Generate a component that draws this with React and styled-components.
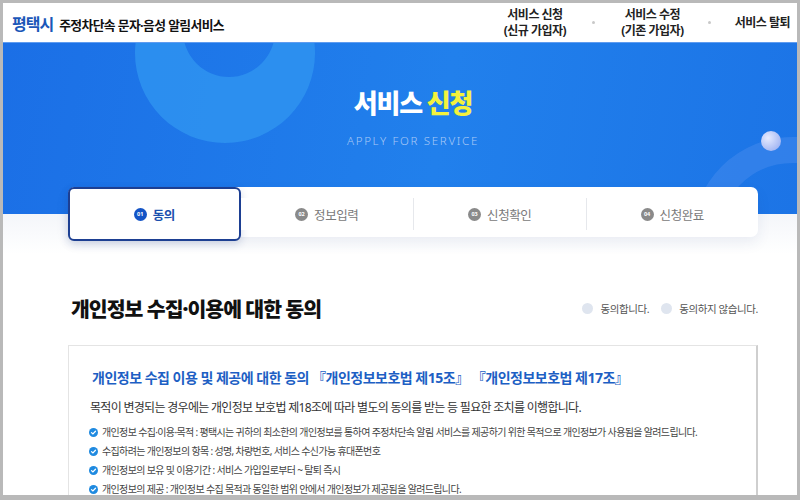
import styled, { createGlobalStyle } from "styled-components";

const GlobalStyle = createGlobalStyle`
  html, body {
    margin: 0;
    padding: 0;
    background: #ffffff;
  }
  body {
    font-family: "Noto Sans", "Noto Sans CJK KR", sans-serif;
    color: #222;
  }
  * { box-sizing: border-box; }
`;

const Frame = styled.div`
  width: 800px;
  height: 500px;
  overflow: hidden;
  border: 3px solid #b9b9b9;
  border-bottom-width: 5px;
  background: #fff;
  display: flex;
  flex-direction: column;
`;

const Header = styled.header`
  height: 40px;
  flex-shrink: 0;
  display: flex;
  align-items: center;
  justify-content: space-between;
  padding: 0 7px 0 9px;
  background: #fff;
  border-bottom: 1px solid #5f9cf0;
`;

const Brand = styled.div`
  display: flex;
  align-items: baseline;
  gap: 6px;
`;

const City = styled.span`
  font-size: 16px;
  font-weight: 700;
  color: #1b57b8;
  letter-spacing: -1px;
`;

const ServiceName = styled.span`
  font-size: 12.8px;
  font-weight: 700;
  color: #111;
  letter-spacing: -0.6px;
`;

const Nav = styled.nav`
  display: flex;
  align-items: center;
`;

const NavItem = styled.a`
  font-size: 12px;
  font-weight: 700;
  color: #222;
  line-height: 16px;
  text-align: center;
  letter-spacing: -0.5px;
  text-decoration: none;
`;

const NavDot = styled.span`
  width: 3px;
  height: 3px;
  border-radius: 50%;
  background: #c8c8c8;
  margin: 0 ${(p) => p.$gap}px;
`;

const Hero = styled.section`
  position: relative;
  height: 171px;
  flex-shrink: 0;
  overflow: hidden;
  background: linear-gradient(100deg, #1b6fe6 0%, #2180ec 55%, #1c74e6 100%);
  display: flex;
  flex-direction: column;
  align-items: center;
  padding: 41px 0 0 26px;
`;

const Deco = styled.svg`
  position: absolute;
  left: 0;
  top: 0;
  pointer-events: none;
`;

const HeroTitle = styled.h1`
  position: relative;
  margin: 0;
  font-family: "Noto Sans CJK KR", sans-serif;
  font-size: 26px;
  font-weight: 900;
  color: #fff;
  letter-spacing: -1.2px;
  line-height: 36px;
`;

const Yellow = styled.span`
  color: #f4f23c;
`;

const HeroSub = styled.p`
  position: relative;
  margin: 13px 0 0;
  font-family: "Noto Sans", "Open Sans", sans-serif;
  font-size: 11.5px;
  font-weight: 300;
  letter-spacing: 1.7px;
  color: #a9c9f6;
`;

const Body = styled.main`
  flex: 1;
  background: linear-gradient(180deg, #f4f6fa 0px, #ffffff 40px);
  padding: 0 40px 0 65px;
`;

const Steps = styled.ol`
  position: relative;
  margin: -27px 0 0;
  padding: 0;
  list-style: none;
  width: 690px;
  height: 50px;
  background: #fff;
  border-radius: 7px;
  box-shadow: 0 6px 14px rgba(40, 70, 130, 0.08);
  display: grid;
  grid-template-columns: repeat(4, 1fr);
  align-items: center;
`;

const Step = styled.li`
  position: relative;
  height: ${(p) => (p.$active ? "54px" : "32px")};
  display: flex;
  align-items: center;
  justify-content: center;
  gap: 6px;
  border: ${(p) => (p.$active ? "2px solid #1d3f92" : "none")};
  border-left: ${(p) =>
    p.$active ? "2px solid #1d3f92" : p.$line ? "1px solid #e6e8ec" : "none"};
  border-radius: ${(p) => (p.$active ? "6px" : "0")};
  background: #fff;
  box-shadow: ${(p) => (p.$active ? "0 3px 8px rgba(20,50,120,0.18)" : "none")};
`;

const Badge = styled.span`
  width: 13px;
  height: 13px;
  border-radius: 50%;
  background: ${(p) => (p.$active ? "#1454c6" : "#8a8a8a")};
  color: #fff;
  font-size: 5.5px;
  font-weight: 700;
  display: flex;
  align-items: center;
  justify-content: center;
`;

const StepLabel = styled.span`
  font-size: 12.5px;
  font-weight: ${(p) => (p.$active ? 700 : 400)};
  color: ${(p) => (p.$active ? "#1b4fae" : "#7a7a7a")};
  letter-spacing: -0.4px;
`;

const SectionHead = styled.div`
  display: flex;
  align-items: center;
  justify-content: space-between;
  width: 690px;
  margin-top: 56px;
  padding-left: 3px;
`;

const SectionTitle = styled.h2`
  margin: 0;
  font-size: 20.5px;
  font-weight: 900;
  color: #111;
  letter-spacing: -1px;
`;

const Choices = styled.div`
  display: flex;
  align-items: center;
  gap: 12px;
`;

const Choice = styled.label`
  display: flex;
  align-items: center;
  gap: 7px;
  font-size: 10.5px;
  color: #555;
  letter-spacing: -0.4px;
`;

const Radio = styled.span`
  width: 11px;
  height: 11px;
  border-radius: 50%;
  background: #dfe5ef;
`;

const Card = styled.section`
  width: 690px;
  margin-top: 22px;
  border: 1px solid #e4e4e4;
  border-right: 2px solid #cfcfcf;
  border-bottom: none;
  padding: 21px 20px 0 23px;
  background: #fff;
`;

const CardTitle = styled.h3`
  margin: 0;
  font-size: 14px;
  font-weight: 700;
  color: #1d5fc4;
  letter-spacing: -0.5px;
  line-height: 22px;
`;

const Lead = styled.p`
  margin: 10px 0 0 -2px;
  font-size: 12px;
  color: #333;
  letter-spacing: -0.7px;
  line-height: 18px;
`;

const List = styled.ul`
  list-style: none;
  margin: 7px 0 0 -3px;
  padding: 0;
  display: flex;
  flex-direction: column;
  gap: 2px;
`;

const Item = styled.li`
  display: flex;
  align-items: center;
  gap: 4px;
  font-size: 10px;
  color: #444;
  letter-spacing: -0.65px;
  line-height: 17px;
  white-space: nowrap;
`;

const Check = () => (
  <svg width="9" height="9" viewBox="0 0 10 10">
    <circle cx="5" cy="5" r="5" fill="#1f8ae0" />
    <path d="M2.8 5.1 L4.4 6.6 L7.2 3.6" fill="none" stroke="#fff" strokeWidth="1.4" strokeLinecap="round" strokeLinejoin="round" />
  </svg>
);

const steps = [
  { no: "01", label: "동의", active: true },
  { no: "02", label: "정보입력" },
  { no: "03", label: "신청확인", line: true },
  { no: "04", label: "신청완료", line: true },
];

const items = [
  "개인정보 수집·이용·목적 : 평택시는 귀하의 최소한의 개인정보를 통하여 주정차단속 알림 서비스를 제공하기 위한 목적으로 개인정보가 사용됨을 알려드립니다.",
  "수집하려는 개인정보의 항목 : 성명, 차량번호, 서비스 수신가능 휴대폰번호",
  "개인정보의 보유 및 이용기간 : 서비스 가입일로부터 ~ 탈퇴 즉시",
  "개인정보의 제공 : 개인정보 수집 목적과 동일한 범위 안에서 개인정보가 제공됨을 알려드립니다.",
];

export default function App() {
  return (
    <>
      <GlobalStyle />
      <Frame>
        <Header>
          <Brand>
            <City>평택시</City>
            <ServiceName>주정차단속 문자·음성 알림서비스</ServiceName>
          </Brand>
          <Nav>
            <NavItem>
              서비스 신청
              <br />
              (신규 가입자)
            </NavItem>
            <NavDot $gap={26} />
            <NavItem>
              서비스 수정
              <br />
              (기존 가입자)
            </NavItem>
            <NavDot $gap={24} />
            <NavItem>서비스 탈퇴</NavItem>
          </Nav>
        </Header>

        <Hero>
          <Deco width="794" height="171" viewBox="0 0 794 171">
            <defs>
              <radialGradient id="ball" cx="35%" cy="35%" r="70%">
                <stop offset="0%" stopColor="#e6ebff" />
                <stop offset="100%" stopColor="#a3b6f3" />
              </radialGradient>
            </defs>
            <path
              d="M132 10 A90 90 0 0 0 312 10 A90 90 0 0 0 132 10 Z M180 -12 A46 46 0 0 1 272 -12 A46 46 0 0 1 180 -12 Z"
              fill="#2f95f0"
              fillOpacity="0.8"
              fillRule="evenodd"
            />
            <circle cx="790" cy="195" r="88" fill="none" stroke="#5a96f0" strokeOpacity="0.35" strokeWidth="26" />
            <circle cx="768" cy="98" r="10" fill="url(#ball)" />
          </Deco>
          <HeroTitle>
            서비스 <Yellow>신청</Yellow>
          </HeroTitle>
          <HeroSub>APPLY FOR SERVICE</HeroSub>
        </Hero>

        <Body>
          <Steps>
            {steps.map((s) => (
              <Step key={s.no} $active={s.active} $line={s.line}>
                <Badge $active={s.active}>{s.no}</Badge>
                <StepLabel $active={s.active}>{s.label}</StepLabel>
              </Step>
            ))}
          </Steps>

          <SectionHead>
            <SectionTitle>개인정보 수집·이용에 대한 동의</SectionTitle>
            <Choices>
              <Choice>
                <Radio />
                동의합니다.
              </Choice>
              <Choice>
                <Radio />
                동의하지 않습니다.
              </Choice>
            </Choices>
          </SectionHead>

          <Card>
            <CardTitle>
              개인정보 수집 이용 및 제공에 대한 동의 『개인정보보호법 제15조』 『개인정보보호법 제17조』
            </CardTitle>
            <Lead>
              목적이 변경되는 경우에는 개인정보 보호법 제18조에 따라 별도의 동의를 받는 등 필요한 조치를 이행합니다.
            </Lead>
            <List>
              {items.map((t) => (
                <Item key={t}>
                  <Check />
                  {t}
                </Item>
              ))}
            </List>
          </Card>
        </Body>
      </Frame>
    </>
  );
}
